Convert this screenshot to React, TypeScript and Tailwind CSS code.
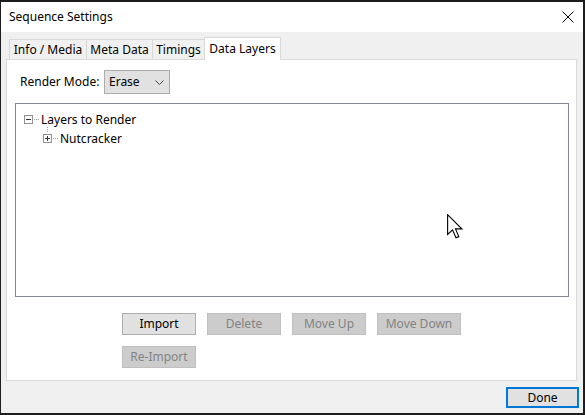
import React from "react";

const font = { fontFamily: '"Segoe UI", "Noto Sans", "Open Sans", sans-serif' };

function Tab({ label, w, active, first }: { label: string; w: string; active?: boolean; first?: boolean }) {
  if (active) {
    return (
      <div
        className={`relative z-10 -mb-px -ml-px flex h-[23px] items-start justify-center border border-b-0 border-[#d9d9d9] bg-white pt-[2px] text-black ${w}`}
      >
        {label}
      </div>
    );
  }
  return (
    <div
      className={`flex h-[20px] items-center justify-center border border-b-0 border-[#d9d9d9] bg-[#f0f0f0] text-black ${w} ${
        first ? "" : "-ml-px"
      }`}
    >
      {label}
    </div>
  );
}

function Btn({ label, disabled, wide }: { label: string; disabled?: boolean; wide?: boolean }) {
  return (
    <div
      className={`flex h-[22px] items-center justify-center border ${wide ? "w-[84px]" : "w-[74px]"} ${
        disabled
          ? "border-[#bfbfbf] bg-[#cccccc] text-[#838383]"
          : "border-[#adadad] bg-[#e1e1e1] text-black"
      }`}
    >
      {label}
    </div>
  );
}

function TreeBox({ kind }: { kind: "minus" | "plus" }) {
  return (
    <div className="relative h-[9px] w-[9px] border border-[#919191] bg-white">
      <div className="absolute left-[1px] top-[3px] h-px w-[5px] bg-[#333]" />
      {kind === "plus" && <div className="absolute left-[3px] top-[1px] h-[5px] w-px bg-[#333]" />}
    </div>
  );
}

function Dots({ w }: { w: number }) {
  return (
    <svg width={w} height="1" className="block">
      {Array.from({ length: Math.ceil(w / 2) }).map((_, i) => (
        <rect key={i} x={i * 2} y="0" width="1" height="1" fill="#a0a0a0" />
      ))}
    </svg>
  );
}

export default function App() {
  return (
    <div className="h-[415px] w-[585px] bg-[#1c1c1c] pt-px text-[12px]" style={font}>
      <div className="relative flex h-[413px] w-[584px] flex-col border border-[#1e1e1e] bg-[#f0f0f0]">
        {/* Title bar */}
        <div className="flex h-[30px] shrink-0 items-center justify-between bg-white pl-[8px] pr-[8px]">
          <span className="text-black">Sequence Settings</span>
          <svg width="12" height="12" viewBox="0 0 12 12" className="mr-[1px]">
            <path d="M0.5 0.5 L11.5 11.5 M11.5 0.5 L0.5 11.5" stroke="#000" strokeWidth="1" />
          </svg>
        </div>

        {/* Tabs */}
        <div className="ml-[5px] mt-[5px] flex flex-col">
          <div className="ml-[3px] flex h-[22px] items-end">
            <Tab label="Info / Media" w="w-[78px]" first />
            <Tab label="Meta Data" w="w-[67px]" />
            <Tab label="Timings" w="w-[53px]" />
            <Tab label="Data Layers" w="w-[77px]" active />
          </div>

          {/* Panel */}
          <div className="flex h-[322px] w-[571px] flex-col border border-[#d9d9d9] bg-white px-[8px] pt-[10px]">
            <div className="flex items-center">
              <span className="ml-[5px] w-[84px] text-black">Render Mode:</span>
              <div className="flex h-[24px] w-[66px] items-center justify-between border border-[#adadad] bg-[#e1e1e1] pl-[4px] pr-[5px] text-black">
                <span>Erase</span>
                <svg width="9" height="5" viewBox="0 0 9 5">
                  <path d="M0.5 0.5 L4.5 4.5 L8.5 0.5" fill="none" stroke="#444" strokeWidth="1" />
                </svg>
              </div>
            </div>

            {/* Tree */}
            <div className="mt-[9px] h-[194px] w-[554px] border border-[#828790] bg-white pl-[8px] pt-[6px] text-black">
              <div className="flex h-[19px] items-center">
                <TreeBox kind="minus" />
                <div className="ml-px mr-[2px]">
                  <Dots w={5} />
                </div>
                <span>Layers to Render</span>
              </div>
              <div className="relative flex h-[19px] items-center pl-[19px]">
                <svg width="1" height="6" className="absolute left-[23px] top-[-2px]">
                  <rect x="0" y="0" width="1" height="1" fill="#a0a0a0" />
                  <rect x="0" y="2" width="1" height="1" fill="#a0a0a0" />
                  <rect x="0" y="4" width="1" height="1" fill="#a0a0a0" />
                </svg>
                <TreeBox kind="plus" />
                <div className="ml-px mr-[2px]">
                  <Dots w={5} />
                </div>
                <span>Nutcracker</span>
              </div>
            </div>

            {/* Buttons */}
            <div className="ml-[107px] mt-[16px] flex flex-col gap-[11px]">
              <div className="flex gap-[11px]">
                <Btn label="Import" />
                <Btn label="Delete" disabled />
                <Btn label="Move Up" disabled />
                <Btn label="Move Down" disabled wide />
              </div>
              <div className="flex">
                <Btn label="Re-Import" disabled />
              </div>
            </div>
          </div>
        </div>

        {/* Footer */}
        <div className="mr-[4px] mt-[6px] flex justify-end">
          <div className="flex h-[21px] w-[73px] items-center justify-center border-2 border-[#0078d7] bg-[#e1e1e1] text-black">
            Done
          </div>
        </div>

        {/* Mouse pointer */}
        <svg
          width="16"
          height="26"
          viewBox="0 0 13 21"
          className="absolute left-[446px] top-[212px]"
        >
          <path
            d="M0.5 0.5 L0.5 16.5 L4.5 12.8 L7.3 19.3 L9.6 18.3 L6.9 12 L12 12 Z"
            fill="#fff"
            stroke="#000"
            strokeWidth="0.9"
            strokeLinejoin="miter"
          />
        </svg>
      </div>
    </div>
  );
}
